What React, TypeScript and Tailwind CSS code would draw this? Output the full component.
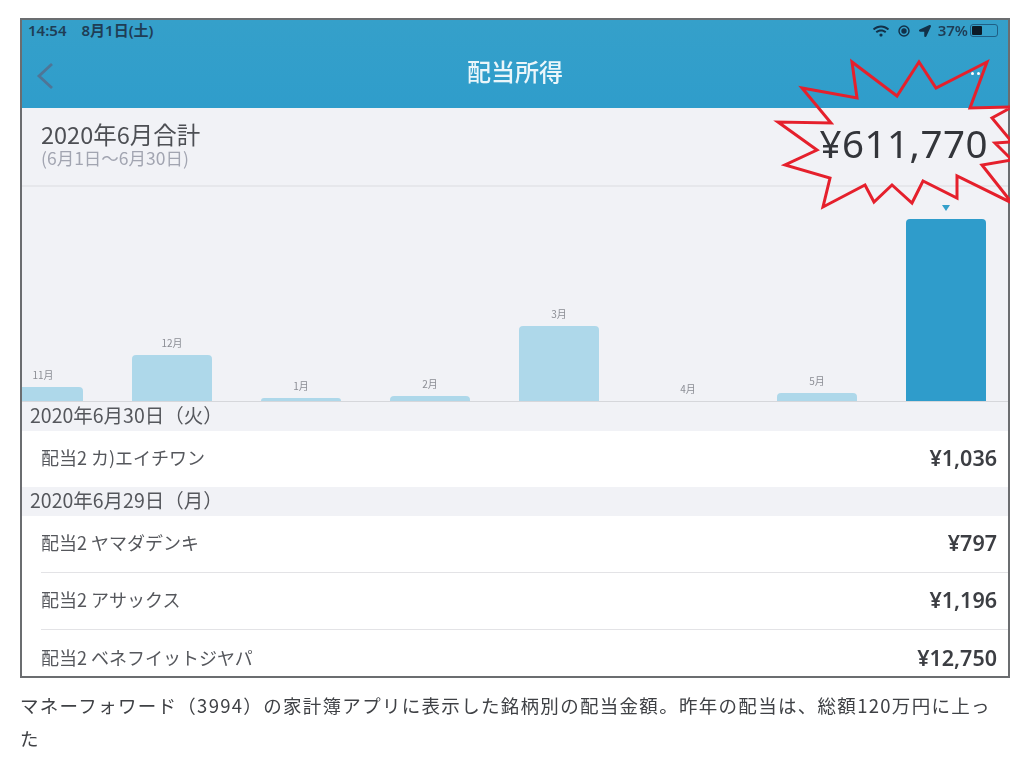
import { FaWifi, FaLocationArrow } from 'react-icons/fa';

const font = { fontFamily: '"Noto Sans CJK JP", "Noto Sans", sans-serif' };

interface BarData {
  label: string;
  height: number;
  active?: boolean;
}

const bars: BarData[] = [
  { label: '11月', height: 14 },
  { label: '12月', height: 46 },
  { label: '1月', height: 3 },
  { label: '2月', height: 5 },
  { label: '3月', height: 75 },
  { label: '4月', height: 0 },
  { label: '5月', height: 8 },
  { label: '', height: 182, active: true },
];

const burst =
  '852,62 857,98 802,88 831,123 778,122 817,150 785,165 830,178 823,207 865,185 874,202 892,185 912,203 923,181 957,198 957,176 1012,203 982,165 1012,160 995,143 1012,142 992,118 1012,107 970,108 987,62 936,88 919,62 897,96';

function Bar({ label, height, active }: BarData) {
  return (
    <div className="w-[80px] shrink-0 flex flex-col items-center justify-end">
      {active ? (
        <div className="w-0 h-0 mb-2 border-x-[4px] border-x-transparent border-t-[6px] border-t-[#35a0ca]" />
      ) : (
        <div className="text-[10px] leading-3 mb-[6px] text-[#8b8d94]">{label}</div>
      )}
      <div
        className={active ? 'w-full rounded-t-[4px] bg-[#2f9ccb]' : 'w-full rounded-t-[4px] bg-[#aed8ea]'}
        style={{ height }}
      />
    </div>
  );
}

function DateHeader({ text }: { text: string }) {
  return (
    <div className="h-[29px] bg-[#f1f2f6] pl-2 pb-1 flex items-center text-[19.5px] leading-6 text-[#55575c]">
      {text}
    </div>
  );
}

function Row({ name, amount, rowClass }: { name: string; amount: string; rowClass: string }) {
  return (
    <div className={`${rowClass} ml-[19px] pr-[11px] pb-0.5 flex items-center justify-between`}>
      <span className="text-[18px] leading-6 pb-0.5 text-[#55575c]">{name}</span>
      <span className="text-[21.5px] leading-7 font-semibold text-[#3c3e43]" style={{ fontFamily: '"Noto Sans", sans-serif' }}>
        {amount}
      </span>
    </div>
  );
}

export default function App() {
  return (
    <div className="w-[1024px] h-[771px] bg-white overflow-hidden relative pt-[18px] pl-5" style={font}>
      <div className="w-[990px] h-[660px] border-2 border-[#6b6d70] overflow-hidden bg-white">
        <div className="blur-[0.5px]">
          <header className="h-[88px] bg-gradient-to-b from-[#35a0ca] to-[#2f9dcb]">
            <div className="h-[21px] pl-1.5 pr-2.5 flex items-center justify-between text-[15px] font-semibold text-[#1f3d55]">
              <div className="flex gap-[15px]" style={{ fontFamily: '"Noto Sans", "Noto Sans CJK JP", sans-serif' }}>
                <span>14:54</span>
                <span>8月1日(土)</span>
              </div>
              <div className="flex items-center gap-[9px]">
                <FaWifi className="w-4 h-4 text-[#123048]" />
                <svg viewBox="0 0 12 12" className="w-3 h-3 text-[#123048]" fill="none" stroke="currentColor" strokeWidth="1.4">
                  <circle cx="6" cy="6" r="5" />
                  <circle cx="6" cy="6" r="2" fill="currentColor" />
                </svg>
                <FaLocationArrow className="w-3 h-3 text-[#123048]" />
                <span className="-ml-0.5" style={{ fontFamily: '"Noto Sans", sans-serif' }}>37%</span>
                <div className="w-[28px] h-[13px] -ml-[7px] rounded-[3px] border border-[#1f5f85] p-px">
                  <div className="w-[10px] h-full rounded-[1px] bg-[#0c1a26]" />
                </div>
              </div>
            </div>
            <div className="h-[56px] relative pt-1 flex items-center justify-center">
              <svg viewBox="0 0 18 28" className="absolute left-[14px] top-[21px] w-[18px] h-[28px]" fill="none" stroke="#4f7596" strokeWidth="2.8">
                <polyline points="16,2 3,14 16,26" />
              </svg>
              <span className="text-[24px] leading-8 font-medium text-white/90">配当所得</span>
              <div className="absolute right-[28px] top-[31px] flex gap-[3px]">
                <div className="w-[3px] h-[3px] rounded-full bg-white" />
                <div className="w-[3px] h-[3px] rounded-full bg-white" />
              </div>
            </div>
          </header>

          <section className="h-[79px] bg-[#f1f2f6] border-b-2 border-[#e6e7eb] pl-[19px] pr-5 flex justify-between">
            <div className="pt-[12px]">
              <div className="text-[23.5px] leading-7 text-[#4d4f54]">2020年6月合計</div>
              <div className="text-[17.5px] leading-[20px] text-[#a2a5b1]">(6月1日〜6月30日)</div>
            </div>
            <div
              className="pt-[10px] text-[38.5px] leading-[50px] tracking-[0.5px] text-[#33353a]"
              style={{ fontFamily: '"Noto Sans", sans-serif' }}
            >
              ¥611,770
            </div>
          </section>

          <section className="h-[215px] bg-[#f1f2f6] border-b border-[#d6d7db] flex items-stretch gap-[49px] -ml-[19px] w-[1010px]">
            {bars.map((bar) => (
              <Bar key={bar.label || 'current'} {...bar} />
            ))}
          </section>

          <DateHeader text="2020年6月30日（火）" />
          <Row name="配当2 カ)エイチワン" amount="¥1,036" rowClass="h-[56px]" />
          <DateHeader text="2020年6月29日（月）" />
          <Row name="配当2 ヤマダデンキ" amount="¥797" rowClass="h-[57px] border-b border-[#e3e3e6]" />
          <Row name="配当2 アサックス" amount="¥1,196" rowClass="h-[57px] border-b border-[#e3e3e6]" />
          <Row name="配当2 ベネフイットジヤパ" amount="¥12,750" rowClass="h-[57px]" />
        </div>
      </div>

      <p className="w-[974px] mt-[11px] text-[18.5px] leading-[33px] tracking-[1.3px] text-[#3f4145] blur-[0.3px]">
        マネーフォワード（3994）の家計簿アプリに表示した銘柄別の配当金額。昨年の配当は、総額120万円に上った
      </p>

      {/* red burst drawn over the screenshot, clipped to the frame */}
      <svg className="absolute left-0 top-0 pointer-events-none" width="1010" height="677" viewBox="0 0 1010 677" fill="none">
        <polygon points={burst} stroke="#e5202c" strokeWidth="3" strokeLinejoin="miter" />
      </svg>
    </div>
  );
}
